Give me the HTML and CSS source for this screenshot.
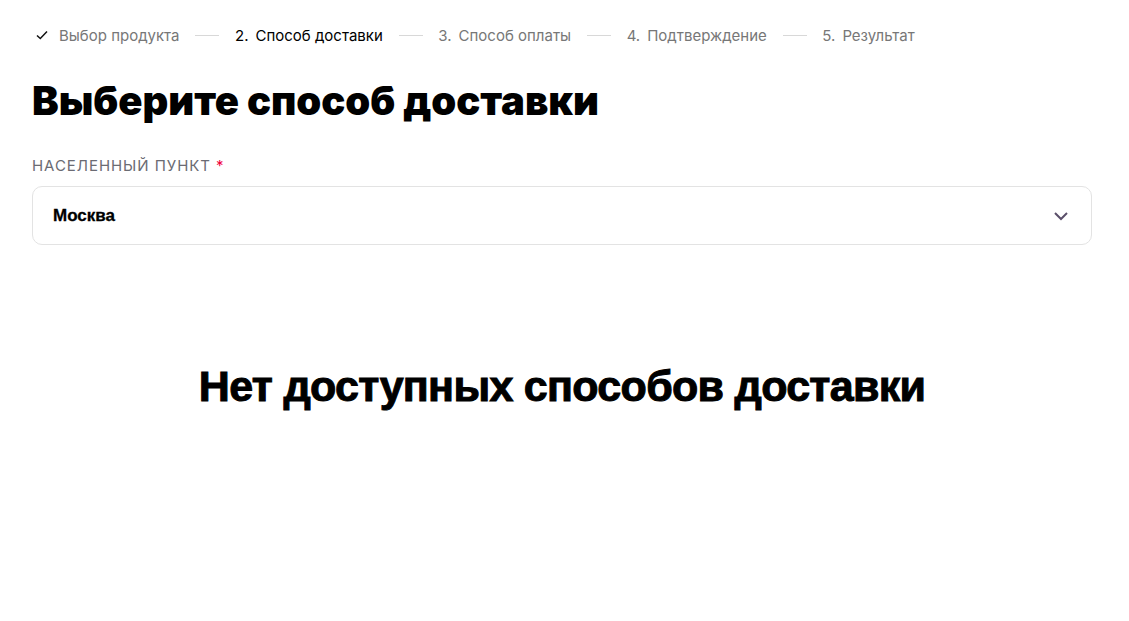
FILE: index.html
```html
<!DOCTYPE html>
<html lang="ru">
<head>
<meta charset="utf-8">
<link rel="stylesheet" href="styles.css">
</head>
<body>
<div class="page">
  <nav class="steps">
    <div class="step done">
      <svg class="check" width="14" height="14" viewBox="0 0 14 14"><path d="M2 7.5 L5.3 10.5 L12 3.5" fill="none" stroke="#111" stroke-width="1.5"/></svg>
      <span>Выбор продукта</span>
    </div>
    <span class="sep"></span>
    <div class="step active"><span class="num">2.</span><span>Способ доставки</span></div>
    <span class="sep"></span>
    <div class="step"><span class="num">3.</span><span>Способ оплаты</span></div>
    <span class="sep"></span>
    <div class="step"><span class="num">4.</span><span>Подтверждение</span></div>
    <span class="sep"></span>
    <div class="step"><span class="num">5.</span><span>Результат</span></div>
  </nav>
  <h1 class="title">Выберите способ доставки</h1>
  <div class="field">
    <label class="label">Населенный пункт <span class="req">*</span></label>
    <div class="select">
      <span class="value">Москва</span>
      <svg class="chevron" width="18" height="18" viewBox="0 0 18 18"><path d="M3 6 L9 12 L15 6" fill="none" stroke="#5b4f6a" stroke-width="2"/></svg>
    </div>
  </div>
  <div class="empty">Нет доступных способов доставки</div>
</div>
</body>
</html>
```
FILE: styles.css
```css
html, body { margin: 0; padding: 0; background: #fff; }
body { font-family: Inter, "Noto Sans", sans-serif; color: #000; }
.page { padding: 0 37px 0 32px; }
.steps { display: flex; align-items: center; height: 72px; margin-top: -1px; }
.step { display: flex; align-items: center; font-size: 15px; color: #777; gap: 7px; }
.step.active { color: #000; }
.check { margin-left: 3px; margin-right: 3px; }
.sep { width: 24px; height: 1px; background: #d8d8d8; margin: 0 15.75px; }
.title { font-family: Inter, sans-serif; font-weight: 900; font-size: 40px; line-height: 48px; margin: 6px 0 0 0; letter-spacing: -0.05px; }
.field { margin-top: 32px; }
.label { display: block; font-size: 15px; letter-spacing: 0.95px; text-transform: uppercase; color: #6b6b73; line-height: 18px; }
.req { color: #f0003c; }
.select { margin-top: 11px; height: 59px; box-sizing: border-box; border: 1px solid #e3e3e3; border-radius: 10px; display: flex; align-items: center; justify-content: space-between; padding: 0 21px 0 20px; }
.value { font-family: "Liberation Sans", Arial, sans-serif; font-weight: 700; font-size: 17px; -webkit-text-stroke: 0.3px #000; }
.empty { text-align: center; font-family: "Liberation Sans", Arial, sans-serif; font-weight: 700; font-size: 43px; margin-top: 117px; letter-spacing: -0.7px; -webkit-text-stroke: 1px #000; }
```
